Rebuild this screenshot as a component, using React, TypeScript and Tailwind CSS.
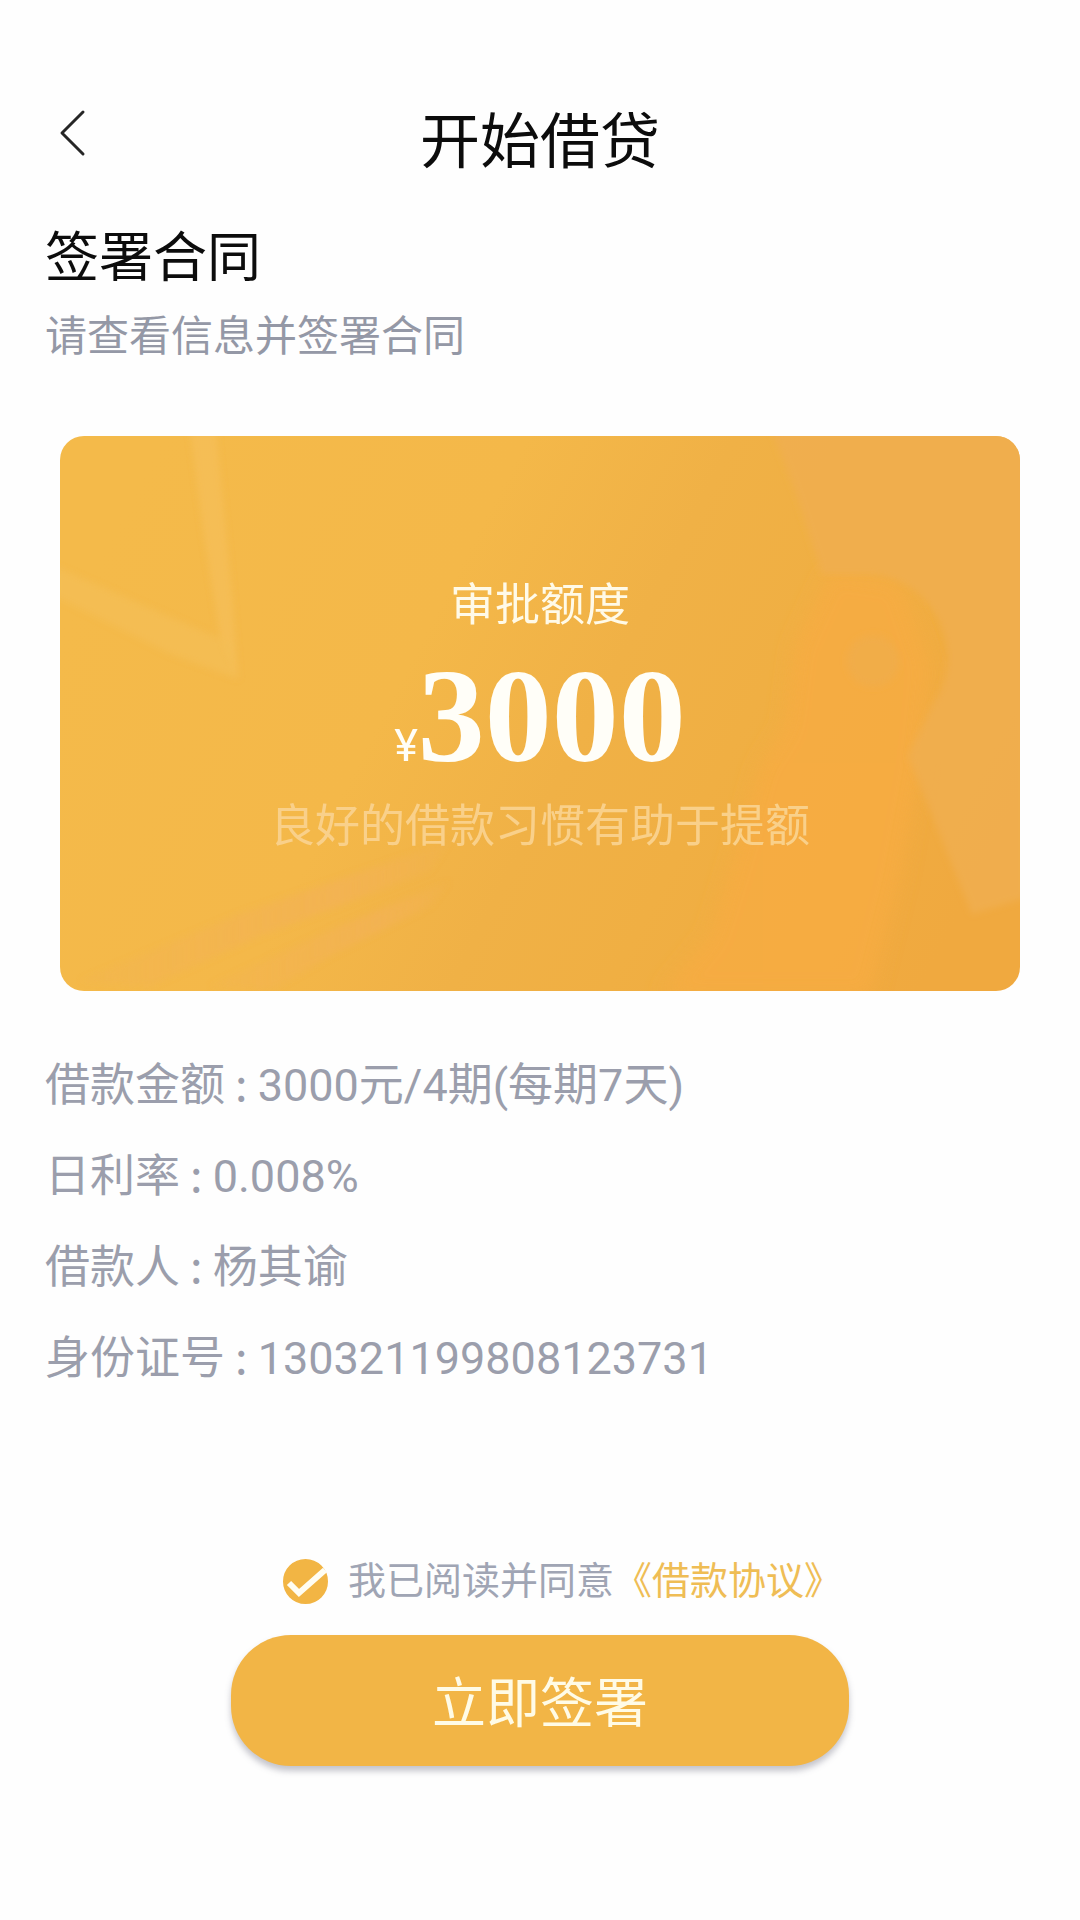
import React, { useState } from 'react';

interface Detail {
  label: string;
  value: string;
}

const details: Detail[] = [
  { label: '借款金额', value: '3000元/4期(每期7天)' },
  { label: '日利率', value: '0.008%' },
  { label: '借款人', value: '杨其谕' },
  { label: '身份证号', value: '130321199808123731' }
];

function CardBackground() {
  return (
    <svg
      className="absolute inset-0 h-full w-full"
      viewBox="0 0 960 555"
      preserveAspectRatio="none"
      aria-hidden="true"
    >
      <defs>
        <linearGradient id="base" x1="0" y1="0.35" x2="1" y2="0.65">
          <stop offset="0" stopColor="#f4ba4a" />
          <stop offset="0.35" stopColor="#f4b849" />
          <stop offset="0.55" stopColor="#f0b146" />
          <stop offset="0.7" stopColor="#f0af43" />
          <stop offset="1" stopColor="#f0a93f" />
        </linearGradient>
        <linearGradient id="streak" x1="0" y1="0" x2="1" y2="0">
          <stop offset="0" stopColor="#f3b452" stopOpacity="0.3" />
          <stop offset="0.7" stopColor="#f3b254" stopOpacity="0.8" />
          <stop offset="1" stopColor="#f3b254" stopOpacity="0.2" />
        </linearGradient>
        <filter id="soft">
          <feGaussianBlur stdDeviation="3" />
        </filter>
        <filter id="softer">
          <feGaussianBlur stdDeviation="10" />
        </filter>
      </defs>
      <rect width="960" height="555" fill="url(#base)" />

      <g filter="url(#soft)">
        <path d="M130 -6 L156 -6 L172 160 L178 243 L160 200 L144 100 Z" fill="#f5bf58" opacity="0.75" />
        <path d="M-6 130 L40 150 L170 207 L178 243 L110 218 L-6 160 Z" fill="#f5bf58" opacity="0.65" />
        <path d="M20 545 L180 478 L390 405 L370 435 L200 500 L90 550 Z" fill="url(#streak)" />
        <path d="M150 550 L280 490 L390 445 L370 470 L270 520 L210 555 Z" fill="url(#streak)" />
      </g>

      {/* warm band running down behind the ring */}
      <path
        d="M770 135 L735 210 L725 290 L700 330 L675 420 L650 500 L600 560 L810 560 L840 440 L860 330 L870 230 L840 145 Z"
        fill="#f7ac42"
        filter="url(#softer)"
        opacity="0.85"
      />

      <g filter="url(#soft)">
        <path
          d="M712 -6 L735 55 L762 138 L815 138 A84 84 0 0 1 872 270 L848 320 L912 478 L966 462 L966 -6 Z"
          fill="#f0ae50"
          opacity="0.85"
        />
        <circle cx="813" cy="225" r="26" fill="#f0ad4b" opacity="0.8" />
      </g>
    </svg>
  );
}

export default function App() {
  const [agreed, setAgreed] = useState(true);

  return (
    <div className="min-h-screen bg-[#fefefe] pt-[93px] pb-36 font-['Roboto','Noto_Sans_CJK_SC',sans-serif]">
      <header className="grid grid-cols-[1fr_auto_1fr] items-start px-[45px]">
        <button type="button" aria-label="返回" className="flex h-20 w-14 items-center justify-center">
          <svg className="h-12 w-7" viewBox="0 0 28 48" fill="none" stroke="#262626" strokeWidth="3">
            <path d="M24 3 L3 24 L24 45" strokeLinecap="round" strokeLinejoin="round" />
          </svg>
        </button>
        <h1 className="text-[60px] leading-[100px] text-[#0c0c0c]">开始借贷</h1>
      </header>

      <main>
        <section className="px-[45px] pt-[30px]">
          <h2 className="text-[54px] leading-[72px] text-[#0c0c0c]">签署合同</h2>
          <p className="mt-3 text-[42px] leading-[60px] text-[#9498a6]">请查看信息并签署合同</p>
        </section>

        <section className="relative mx-[60px] mt-[69px] flex flex-col items-center overflow-hidden rounded-3xl pt-[140px] pb-[134px] text-center">
          <CardBackground />
          <h3 className="relative text-[45px] leading-[60px] text-[#fffae8]">审批额度</h3>
          <p className="relative flex items-baseline text-[#fffef8]">
            <span className="text-[45px]">¥</span>
            <strong className="font-['Liberation_Serif',serif] text-[134px] leading-[161px]">3000</strong>
          </p>
          <p className="relative text-[45px] leading-[60px] text-[#f9d08a]">良好的借款习惯有助于提额</p>
        </section>

        <dl className="flex flex-col gap-[27px] px-[45px] pt-[61px] text-[45px] leading-[60px] text-[#9b9eac]">
          {details.map((item) => (
            <div key={item.label}>
              <dt className="inline whitespace-pre font-['Noto_Sans_CJK_SC',sans-serif]">{item.label} : </dt>
              <dd className="inline">{item.value}</dd>
            </div>
          ))}
        </dl>

        <form className="flex flex-col items-center pt-[162px]" onSubmit={(e) => e.preventDefault()}>
          <div className="flex items-center pl-[45px] text-[38px] leading-[60px] text-[#a0a5b4]">
            <span className="relative mr-5 flex h-[45px] w-[45px]">
              <input
                type="checkbox"
                id="agree"
                checked={agreed}
                onChange={(e) => setAgreed(e.target.checked)}
                className="h-full w-full appearance-none rounded-full border-2 border-[#f2b544] checked:bg-[#f2b544]"
              />
              {agreed && (
                <svg className="pointer-events-none absolute inset-0" viewBox="0 0 45 45" fill="none" stroke="#fffdf2" strokeWidth="6">
                  <path d="M6 24 L16 34 L42 11" />
                </svg>
              )}
            </span>
            <label htmlFor="agree">我已阅读并同意</label>
            <a href="#agreement" className="text-[#efbd55]">《借款协议》</a>
          </div>
          <button
            type="submit"
            className="mt-6 h-[131px] w-[618px] max-w-full rounded-[60px] bg-[#f2b546] pt-2 text-[54px] leading-[72px] text-[#fffbe6] shadow-[0_5px_6px_rgba(90,90,110,0.35)]"
          >
            立即签署
          </button>
        </form>
      </main>
    </div>
  );
}
